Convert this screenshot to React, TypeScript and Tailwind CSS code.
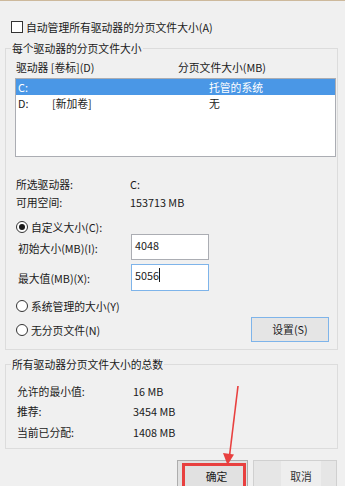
import React from "react";

const font = { fontFamily: '"Noto Sans CJK SC", "Noto Sans", sans-serif' };

function Radio({ checked }: { checked?: boolean }) {
  return (
    <span className="w-[12px] h-[12px] rounded-full border border-[#333] bg-white flex items-center justify-center shrink-0">
      {checked && <span className="w-[6px] h-[6px] rounded-full bg-[#1a1a1a]" />}
    </span>
  );
}

export default function App() {
  return (
    <div
      className="relative w-[345px] h-[486px] overflow-hidden bg-[#f0f0f0] border-t border-[#cdb99c] text-[10.8px] text-[#1a1a1a]"
      style={font}
    >
      {/* checkbox row */}
      <div className="mt-[19px] ml-[11px] flex items-center h-[14px] leading-[14px]">
        <span className="w-[12px] h-[12px] border border-[#333] bg-white shrink-0" />
        <span className="ml-[3px]">自动管理所有驱动器的分页文件大小(A)</span>
      </div>

      {/* group 1 */}
      <fieldset className="mt-[7px] ml-[5px] w-[333px] border border-[#dcdcdc] p-0">
        <legend className="ml-[5px] px-[1px] leading-[14px]">每个驱动器的分页文件大小</legend>
        <div className="pl-[9px] pt-[5px] pb-[7px]">
          <div className="flex h-[14px] leading-[14px]">
            <span className="w-[163px] pl-[1px]">驱动器 [卷标](D)</span>
            <span>分页文件大小(MB)</span>
          </div>
          <div className="mt-[4px] w-[321px] h-[79px] border border-[#abadb3] bg-white">
            <div className="flex h-[16px] leading-[16px] bg-[#4a97e6] text-white pl-[2px]">
              <span className="w-[34px]">C:</span>
              <span className="w-[157px]"></span>
              <span>托管的系统</span>
            </div>
            <div className="flex h-[16px] leading-[16px] pl-[2px]">
              <span className="w-[34px]">D:</span>
              <span className="w-[157px]">[新加卷]</span>
              <span>无</span>
            </div>
          </div>

          <div className="mt-[18px] flex h-[18px] leading-[18px] pl-[1px]">
            <span className="w-[114px]">所选驱动器:</span>
            <span>C:</span>
          </div>
          <div className="flex h-[18px] leading-[18px] pl-[1px]">
            <span className="w-[114px]">可用空间:</span>
            <span>153713 MB</span>
          </div>

          <div className="mt-[9px] flex items-center h-[14px] leading-[14px] pl-[1px]">
            <Radio checked />
            <span className="ml-[3px]">自定义大小(C):</span>
          </div>

          <div className="flex items-center h-[26px]">
            <span className="w-[116px] pl-[3px] pt-[2px]">初始大小(MB)(I):</span>
            <div className="w-[78px] h-[26px] border border-[#abadb3] bg-white pl-[3px] pt-[2px] leading-[16px]">
              4048
            </div>
          </div>
          <div className="mt-[4px] flex items-center h-[27px]">
            <span className="w-[116px] pl-[3px] pt-[2px]">最大值(MB)(X):</span>
            <div className="w-[78px] h-[27px] border border-[#7eb4ea] bg-white pl-[3px] pt-[2px] leading-[16px] flex items-start">
              <span>5056</span>
              <span className="w-px h-[14px] bg-[#1a1a1a] mt-[1px]" />
            </div>
          </div>

          <div className="mt-[8px] flex items-center h-[14px] leading-[14px] pl-[1px]">
            <Radio />
            <span className="ml-[3px]">系统管理的大小(Y)</span>
          </div>

          <div className="mt-[4px] flex items-center h-[25px] pl-[1px] pr-[8px]">
            <Radio />
            <span className="ml-[3px] mt-[2px]">无分页文件(N)</span>
            <button className="ml-auto w-[78px] h-[25px] border border-[#7eb4ea] bg-[#e5e5e5] flex items-center justify-center">
              设置(S)
            </button>
          </div>
        </div>
      </fieldset>

      {/* group 2 */}
      <fieldset className="mt-[7px] ml-[5px] w-[333px] border border-[#dcdcdc] p-0">
        <legend className="ml-[5px] px-[1px] leading-[14px]">所有驱动器分页文件大小的总数</legend>
        <div className="pl-[11px] pt-[10px] pb-[6px]">
          <div className="flex h-[20px] leading-[20px]">
            <span className="w-[116px]">允许的最小值:</span>
            <span>16 MB</span>
          </div>
          <div className="flex h-[21px] leading-[21px]">
            <span className="w-[116px]">推荐:</span>
            <span>3454 MB</span>
          </div>
          <div className="flex h-[20px] leading-[20px]">
            <span className="w-[116px]">当前已分配:</span>
            <span>1408 MB</span>
          </div>
        </div>
      </fieldset>

      {/* bottom buttons */}
      <div className="mt-[11px] flex">
        <div className="relative ml-[177px] w-[71px] h-[32px] border border-[#adadad] bg-[#e1e1e1] flex items-start justify-center pt-[7px] pl-[8px]">
          确定
          <span className="absolute left-[4px] top-[2px] right-[1px] bottom-[-4px] border-[3px] border-[#e8403f]" />
        </div>
        <div className="relative ml-[5px] w-[84px] h-[32px] border border-[#d0d0d0] bg-[#e6e6e6] flex items-start justify-center pt-[7px] pl-[12px] text-[#333]">
          <span className="absolute left-[27px] top-0 w-[40px] h-full bg-[#eeeeee]" />
          <span className="relative">取消</span>
        </div>
      </div>

      {/* red arrow */}
      <svg className="absolute left-0 top-0 pointer-events-none" width="345" height="486">
        <line x1="238" y1="385" x2="229.5" y2="455" stroke="#e8403f" strokeWidth="1.6" />
        <polygon points="227.5,464 223,452 234,453.5" fill="#e8403f" />
      </svg>
    </div>
  );
}
